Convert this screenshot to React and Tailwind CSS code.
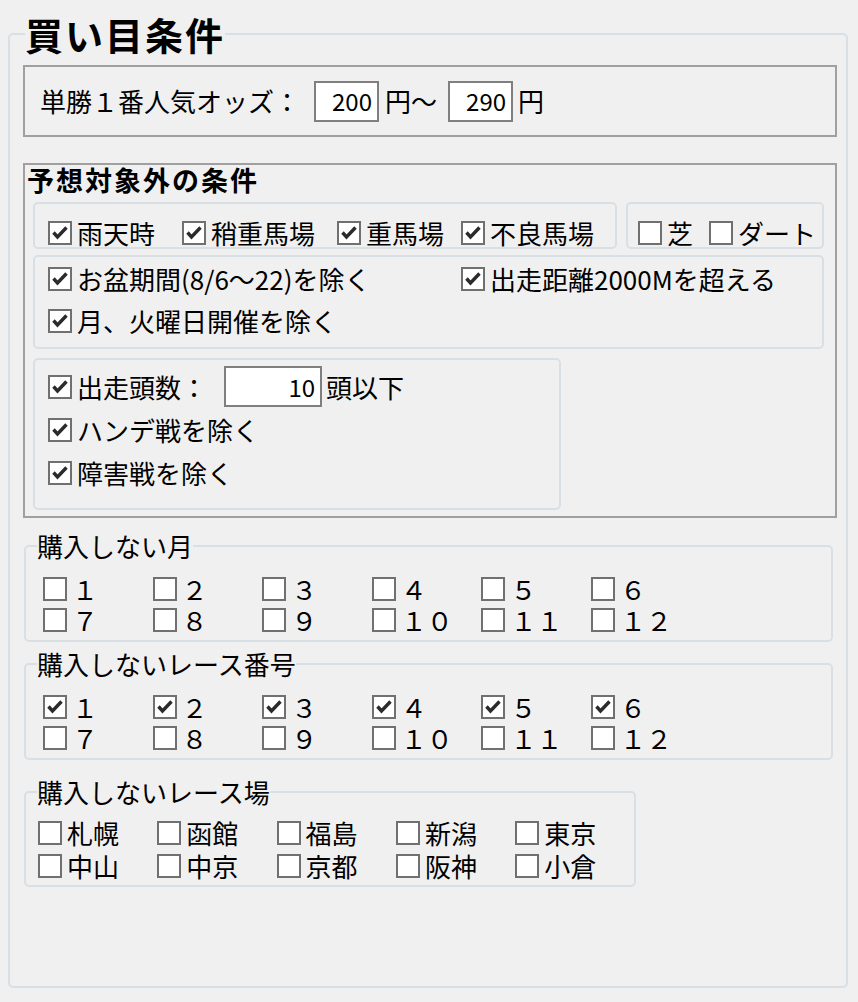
import React from 'react'

const months = ['１', '２', '３', '４', '５', '６', '７', '８', '９', '１０', '１１', '１２']
const raceChecked = [true, true, true, true, true, true, false, false, false, false, false, false]
const courses = ['札幌', '函館', '福島', '新潟', '東京', '中山', '中京', '京都', '阪神', '小倉']

function Box({ checked }) {
  return (
    <svg width="24" height="24" viewBox="0 0 24 24" className="shrink-0">
      <rect x="1" y="1" width="22" height="22" fill="#ffffff" stroke="#707070" strokeWidth="2" />
      {checked && (
        <path d="M5.5 11.5 9.5 16 18.5 6.5" fill="none" stroke="#2b2b2b" strokeWidth="3.4" />
      )}
    </svg>
  )
}

function Check({ checked, label, className = '' }) {
  return (
    <div className={`flex items-center gap-[5px] shrink-0 ${className}`}>
      <Box checked={checked} />
      <span className="leading-none whitespace-nowrap">{label}</span>
    </div>
  )
}

function TextBox({ value, className = '' }) {
  return (
    <div className={`h-[41px] bg-white border-2 border-[#7f7f7f] flex items-center justify-end pr-[5px] text-[24px] leading-none shrink-0 ${className}`}>
      {value}
    </div>
  )
}

// light Windows-style group frame without title
function Frame({ className = '', children }) {
  return (
    <div className={`border-2 border-[#d8dfe5] rounded-[5px] ${className}`}>
      {children}
    </div>
  )
}

function GroupBox({ title, className = '', children }) {
  return (
    <fieldset className={`border-2 border-[#d8dfe5] rounded-[5px] ${className}`}>
      <legend className="ml-[11px] text-[26px] leading-[30px]">{title}</legend>
      {children}
    </fieldset>
  )
}

export default function App() {
  return (
    <div className="w-[858px] h-[1002px] bg-[#f0f0f0] pt-[14px] pl-[8px] text-black text-[26px] font-['Noto_Sans_CJK_JP','Noto_Sans_CJK_SC',sans-serif]">
      <fieldset className="w-[840px] h-[974px] border-2 border-[#d8dfe5] rounded-[5px]">
        <legend className="ml-[15px] text-[38px] font-bold leading-[40px] tracking-[2px]">買い目条件</legend>

        <div className="pl-[13px] pr-[9px] pt-[11px]">
          {/* odds */}
          <div className="h-[72px] border-2 border-[#a0a0a0] flex items-center pl-[15px] leading-none">
            <span className="whitespace-nowrap">単勝１番人気オッズ：</span>
            <TextBox value="200" className="ml-[14px] w-[65px]" />
            <span className="ml-[6px] whitespace-nowrap">円～</span>
            <TextBox value="290" className="ml-[11px] w-[65px]" />
            <span className="ml-[5px]">円</span>
          </div>

          {/* exclusion conditions */}
          <div className="mt-[26px] h-[355px] border-2 border-[#a0a0a0] px-[8px]">
            <div className="pt-px text-[27px] font-bold leading-[28px] tracking-[2px] -ml-[6px]">予想対象外の条件</div>

            <div className="mt-[8px] flex gap-[9px]">
              <Frame className="w-[584px] h-[47px] pl-[13px] pt-[14px] flex items-center">
                <Check checked label="雨天時" className="w-[134px]" />
                <Check checked label="稍重馬場" className="w-[155px]" />
                <Check checked label="重馬場" className="w-[124px]" />
                <Check checked label="不良馬場" />
              </Frame>
              <Frame className="w-[198px] h-[47px] pl-[10px] pt-[14px] flex items-center">
                <Check label="芝" className="w-[71px]" />
                <Check label="ダート" />
              </Frame>
            </div>

            <Frame className="mt-[6px] w-[791px] h-[94px] pl-[13px] pt-px">
              <div className="h-[42px] flex items-center">
                <Check checked label="お盆期間(8/6～22)を除く" className="w-[413px]" />
                <Check checked label="出走距離2000Mを超える" />
              </div>
              <div className="h-[42px] flex items-center">
                <Check checked label="月、火曜日開催を除く" />
              </div>
            </Frame>

            <Frame className="mt-[9px] w-[528px] h-[152px] pl-[13px] pt-[5px]">
              <div className="h-[43px] flex items-center">
                <Check checked label="出走頭数：" />
                <TextBox value="10" className="ml-[17px] w-[98px]" />
                <span className="ml-[4px] leading-none">頭以下</span>
              </div>
              <div className="h-[43px] flex items-center">
                <Check checked label="ハンデ戦を除く" />
              </div>
              <div className="h-[43px] flex items-center">
                <Check checked label="障害戦を除く" />
              </div>
            </Frame>
          </div>

          <GroupBox title="購入しない月" className="mt-[13px] ml-px w-[809px] h-[111px]">
            <div className="pl-[17px] pt-[12px] grid grid-cols-[repeat(6,109.6px)] auto-rows-[31px] items-center">
              {months.map((m) => (
                <Check key={m} label={m} />
              ))}
            </div>
          </GroupBox>

          <GroupBox title="購入しないレース番号" className="mt-[7px] ml-px w-[809px] h-[111px]">
            <div className="pl-[17px] pt-[12px] grid grid-cols-[repeat(6,109.6px)] auto-rows-[31px] items-center">
              {months.map((m, i) => (
                <Check key={m} label={m} checked={raceChecked[i]} />
              ))}
            </div>
          </GroupBox>

          <GroupBox title="購入しないレース場" className="mt-[17px] ml-px w-[607px] h-[110px]">
            <div className="pl-[12px] pt-[9px] grid grid-cols-[repeat(5,119.3px)] auto-rows-[33px] items-center">
              {courses.map((c) => (
                <Check key={c} label={c} />
              ))}
            </div>
          </GroupBox>
        </div>
      </fieldset>
    </div>
  )
}
